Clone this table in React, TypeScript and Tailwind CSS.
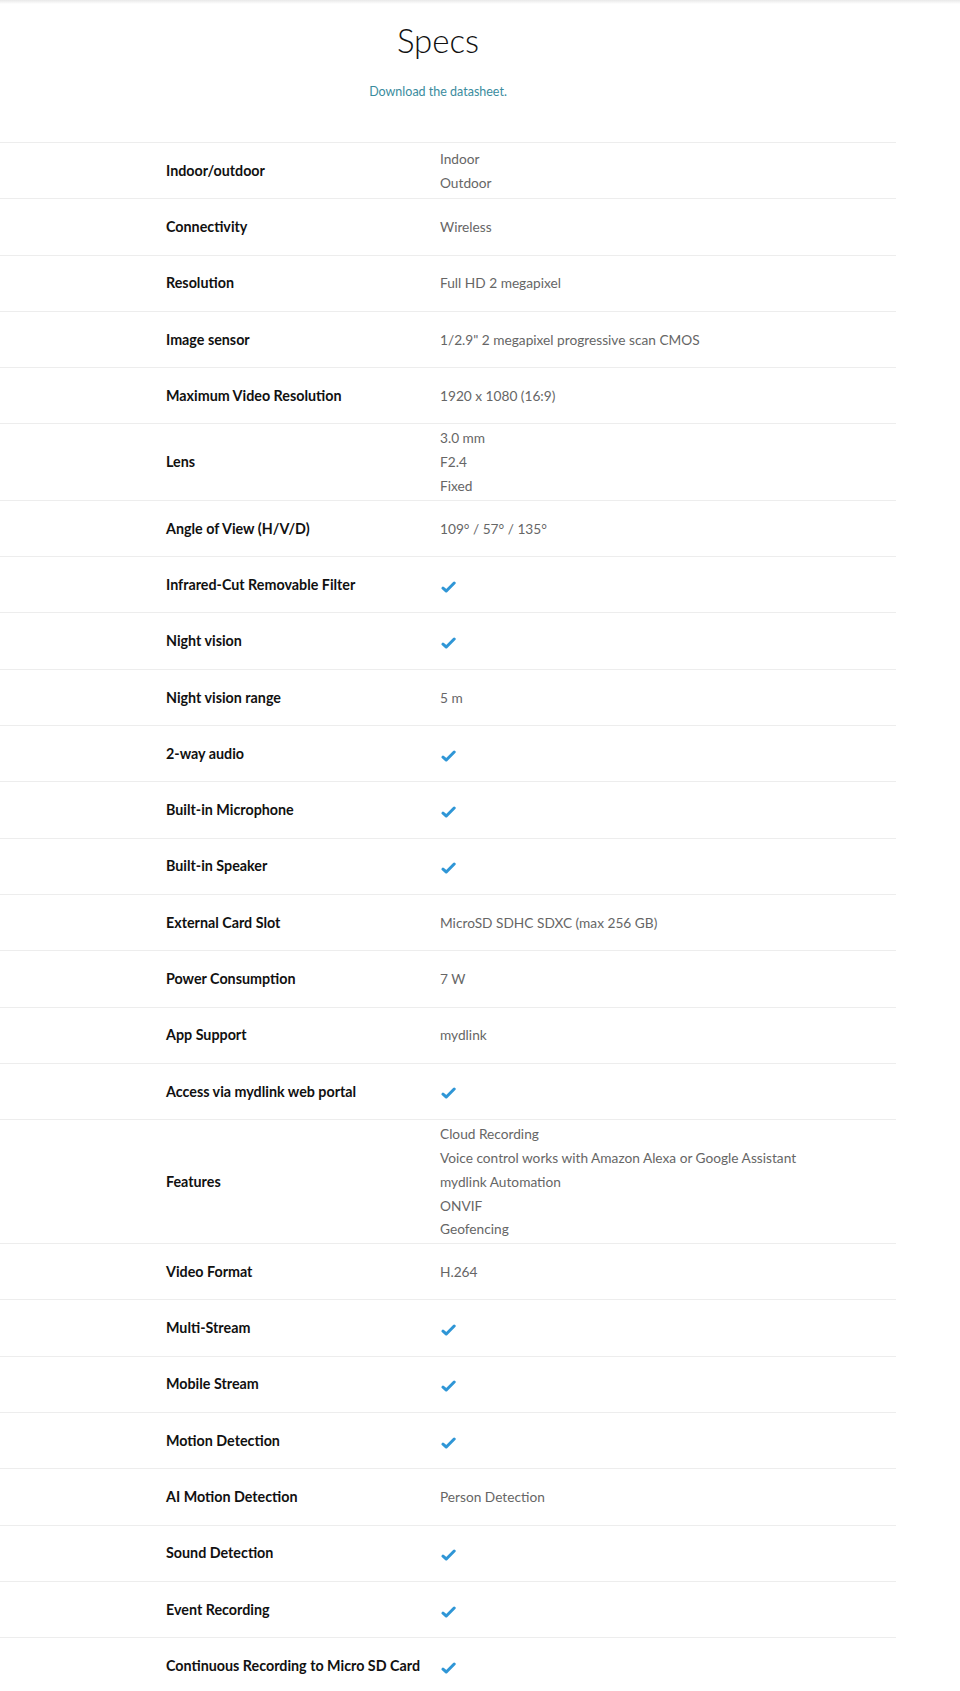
import React from "react";

type Spec = { label: string; value: string[] | "check" };

const specs: Spec[] = [
  { label: "Indoor/outdoor", value: ["Indoor", "Outdoor"] },
  { label: "Connectivity", value: ["Wireless"] },
  { label: "Resolution", value: ["Full HD 2 megapixel"] },
  { label: "Image sensor", value: ['1/2.9" 2 megapixel progressive scan CMOS'] },
  { label: "Maximum Video Resolution", value: ["1920 x 1080 (16:9)"] },
  { label: "Lens", value: ["3.0 mm", "F2.4", "Fixed"] },
  { label: "Angle of View (H/V/D)", value: ["109° / 57° / 135°"] },
  { label: "Infrared-Cut Removable Filter", value: "check" },
  { label: "Night vision", value: "check" },
  { label: "Night vision range", value: ["5 m"] },
  { label: "2-way audio", value: "check" },
  { label: "Built-in Microphone", value: "check" },
  { label: "Built-in Speaker", value: "check" },
  { label: "External Card Slot", value: ["MicroSD SDHC SDXC (max 256 GB)"] },
  { label: "Power Consumption", value: ["7 W"] },
  { label: "App Support", value: ["mydlink"] },
  { label: "Access via mydlink web portal", value: "check" },
  {
    label: "Features",
    value: [
      "Cloud Recording",
      "Voice control works with Amazon Alexa or Google Assistant",
      "mydlink Automation",
      "ONVIF",
      "Geofencing",
    ],
  },
  { label: "Video Format", value: ["H.264"] },
  { label: "Multi-Stream", value: "check" },
  { label: "Mobile Stream", value: "check" },
  { label: "Motion Detection", value: "check" },
  { label: "AI Motion Detection", value: ["Person Detection"] },
  { label: "Sound Detection", value: "check" },
  { label: "Event Recording", value: "check" },
  { label: "Continuous Recording to Micro SD Card", value: "check" },
];

function Check() {
  return (
    <svg width="15" height="12" viewBox="0 0 15 12" className="ml-[1px] mt-[4px]">
      <path
        d="M2 7.2 L5.3 10 L13.2 2"
        fill="none"
        stroke="#2f96d6"
        strokeWidth="3"
        strokeLinecap="round"
        strokeLinejoin="round"
      />
    </svg>
  );
}

export default function App() {
  return (
    <div
      className="w-[960px] min-h-[1691px] bg-white"
      style={{ fontFamily: "Lato, 'Noto Sans', sans-serif" }}
    >
      <div className="h-[4px] bg-gradient-to-b from-[#e9e9e9] to-white" />
      <div className="w-[876px] flex flex-col items-center">
        <h1 className="mt-[16px] text-[33px] font-light leading-[40px] text-[#111]">Specs</h1>
        <a className="mt-[24px] text-[12.5px] leading-[16px] text-[#3a8c9e]">
          Download the datasheet.
        </a>
      </div>
      <div className="mt-[42px] w-[896px]">
        {specs.map((s, i) => (
          <div
            key={i}
            className="flex items-center min-h-[56.3px] border-t border-[#ededed] py-[2px] pl-[166px]"
          >
            <div className="w-[274px] shrink-0 text-[14.3px] font-bold text-[#111] leading-[23.8px]">
              {s.label}
            </div>
            <div className="text-[13.7px] leading-[23.8px] text-[#666]">
              {s.value === "check" ? (
                <Check />
              ) : (
                s.value.map((v, j) => <div key={j}>{v}</div>)
              )}
            </div>
          </div>
        ))}
      </div>
    </div>
  );
}
